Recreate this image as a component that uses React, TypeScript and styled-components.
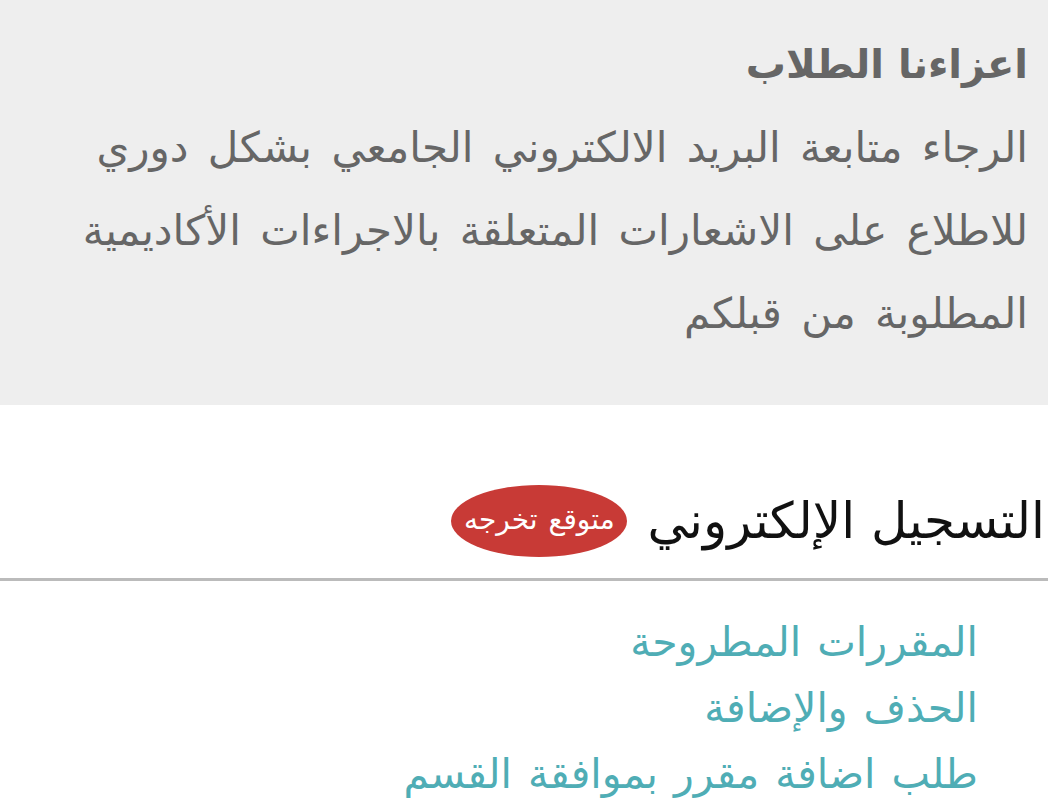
import React from "react";
import styled, { createGlobalStyle } from "styled-components";

const Global = createGlobalStyle`
  html, body { margin: 0; padding: 0; background: #ffffff; }
  body { font-family: "DejaVu Sans", "Noto Sans", sans-serif; }
`;

const Page = styled.div`
  direction: rtl;
  width: 1048px;
  font-family: "DejaVu Sans", sans-serif;
`;

const Notice = styled.section`
  background: #eeeeee;
  padding: 35px 20px 0 20px;
  color: #666666;
  height: 405px;
  box-sizing: border-box;
`;

const NoticeTitle = styled.h2`
  margin: 0 0 13px 0;
  font-size: 40px;
  font-weight: bold;
  line-height: 58px;
`;

const NoticeBody = styled.p`
  margin: 0;
  font-size: 42px;
  font-weight: normal;
  line-height: 83px;
  word-spacing: 6px;
`;

const Section = styled.section`
  padding-top: 78px;
`;

const Heading = styled.div`
  display: flex;
  align-items: center;
  gap: 20px;
  padding: 0 3px 19px 0;
  border-bottom: 3px solid #bbbbbb;
`;

const HeadingText = styled.h1`
  margin: 0;
  font-size: 50px;
  font-weight: normal;
  line-height: 76px;
  color: #111111;
`;

const Badge = styled.span`
  display: inline-flex;
  align-items: center;
  justify-content: center;
  width: 176px;
  height: 72px;
  border-radius: 50%;
  background: #c83a36;
  color: #ffffff;
  font-size: 28px;
  word-spacing: 2px;
  padding-bottom: 4px;
  box-sizing: border-box;
`;

const LinkList = styled.ul`
  list-style: none;
  margin: 0;
  padding: 28px 70px 0 0;
`;

const LinkItem = styled.li`
  font-size: 41px;
  line-height: 66px;
  word-spacing: 3px;
  color: #4fadb5;
`;

export default function App() {
  return (
    <Page>
      <Global />
      <Notice>
        <NoticeTitle>اعزاءنا الطلاب</NoticeTitle>
        <NoticeBody>
          الرجاء متابعة البريد الالكتروني الجامعي بشكل دوري للاطلاع على الاشعارات المتعلقة بالاجراءات الأكاديمية المطلوبة من قبلكم
        </NoticeBody>
      </Notice>
      <Section>
        <Heading>
          <HeadingText>التسجيل الإلكتروني</HeadingText>
          <Badge>متوقع تخرجه</Badge>
        </Heading>
        <LinkList>
          <LinkItem>المقررات المطروحة</LinkItem>
          <LinkItem>الحذف والإضافة</LinkItem>
          <LinkItem>طلب اضافة مقرر بموافقة القسم</LinkItem>
        </LinkList>
      </Section>
    </Page>
  );
}
